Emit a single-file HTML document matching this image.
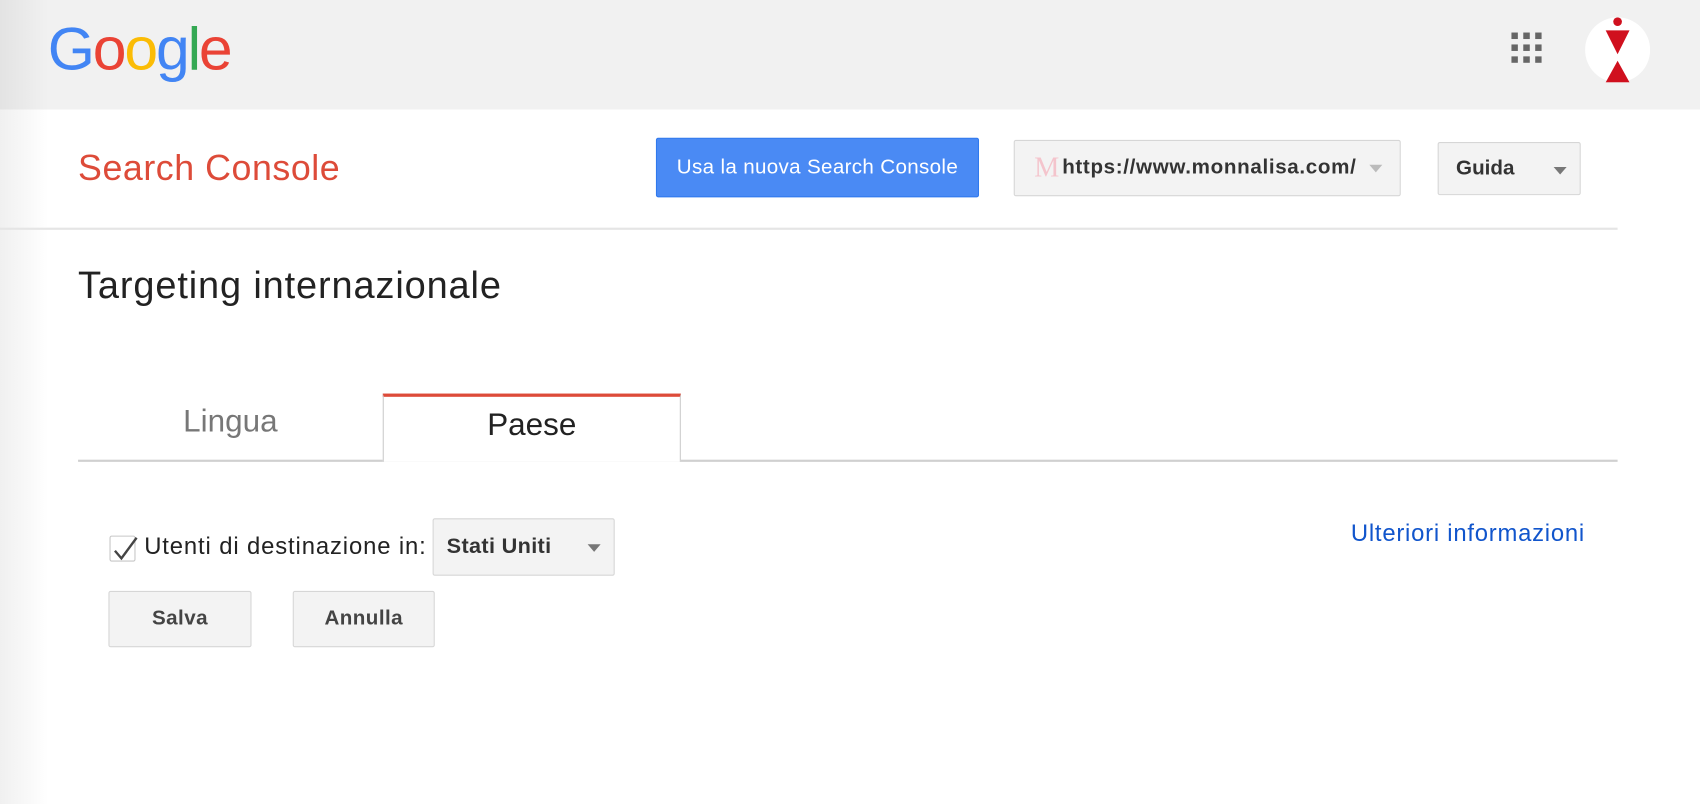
<!DOCTYPE html>
<html><head><meta charset="utf-8"><style>
html,body{margin:0;padding:0;width:1700px;height:804px;overflow:hidden;background:#fff;font-family:"Liberation Sans",Arial,sans-serif}
#w{position:absolute;left:0;top:0;width:1568px;height:742px;transform:scale(1.08418);transform-origin:0 0;background:#fff}
.a{position:absolute;white-space:nowrap}
.btn{position:absolute;box-sizing:border-box;background:#f3f3f3;border:1px solid #d6d6d6;border-radius:2px;font-weight:bold;color:#444;display:flex;align-items:center;white-space:nowrap}
.tri{position:absolute;width:0;height:0;border-left:6px solid transparent;border-right:6px solid transparent;border-top:7px solid #777}
</style></head><body><div id="w">
<div class="a" style="left:0;top:0;width:1568px;height:101px;background:#f1f1f1"></div>
<div class="a" style="left:0;top:0;width:45px;height:742px;background:linear-gradient(to right,rgba(0,0,0,0.06),rgba(0,0,0,0))"></div>
<div class="a" style="left:44px;top:12px;font-size:56px;letter-spacing:-2px;line-height:66px"><span style="color:#4285f4">G</span><span style="color:#ea4335">o</span><span style="color:#fbbc05">o</span><span style="color:#4285f4">g</span><span style="color:#34a853">l</span><span style="color:#ea4335">e</span></div>
<svg class="a" style="left:1394px;top:30px" width="28" height="28" fill="#666">
<rect x="0" y="0" width="6" height="6"/><rect x="11" y="0" width="6" height="6"/><rect x="22" y="0" width="6" height="6"/>
<rect x="0" y="11" width="6" height="6"/><rect x="11" y="11" width="6" height="6"/><rect x="22" y="11" width="6" height="6"/>
<rect x="0" y="22" width="6" height="6"/><rect x="11" y="22" width="6" height="6"/><rect x="22" y="22" width="6" height="6"/></svg>
<svg class="a" style="left:1462px;top:16px" width="60" height="60"><circle cx="30" cy="30" r="30" fill="#fff"/><circle cx="30" cy="4" r="4" fill="#d0101e"/><path d="M19 12H41L30 34Z M30 40L41 60H19Z" fill="#d0101e"/></svg>
<div class="a" style="left:72px;top:136px;font-size:33px;letter-spacing:0.5px;color:#dd4b39">Search Console</div>
<div class="btn" style="left:605px;top:127px;width:298px;height:55px;background:#4a8af4;border-color:#3079ed;color:#fff;font-weight:normal;font-size:19px;letter-spacing:0.3px;justify-content:center">Usa la nuova Search Console</div>
<div class="btn" style="left:935px;top:129px;width:357px;height:52px;font-size:19px;letter-spacing:0.6px;color:#333"><span style="color:#f4c4cc;font-family:'Liberation Serif',serif;font-size:26px;margin-left:18px;font-weight:normal">M</span><span style="margin-left:2px">https://www.monnalisa.com/</span><div class="tri" style="left:327px;top:22px;border-top-color:#bbb;border-width:7px 6px 0"></div></div>
<div class="btn" style="left:1326px;top:131px;width:132px;height:49px;font-size:19px;color:#333"><span style="margin-left:16px">Guida</span><div class="tri" style="left:106px;top:22px"></div></div>
<div class="a" style="left:0;top:210px;width:1492px;height:2px;background:#e5e5e5"></div>
<div class="a" style="left:72px;top:244px;font-size:35px;letter-spacing:0.8px;color:#222">Targeting internazionale</div>
<div class="a" style="left:72px;top:424px;width:1420px;height:2px;background:#d0d0d0"></div>
<div class="a" style="left:72px;top:373px;width:281px;text-align:center;font-size:29px;color:#777">Lingua</div>
<div class="a" style="left:353px;top:363px;width:275px;height:63px;border-top:3px solid #dd4b39;border-left:1px solid #ccc;border-right:1px solid #ccc;background:#fff;box-sizing:border-box;text-align:center;font-size:29px;color:#222;padding-top:10px">Paese</div>
<div class="a" style="left:101px;top:494px;width:24px;height:24px;border:1px solid #c6c6c6;border-radius:2px;box-sizing:border-box;background:#fff"></div>
<svg class="a" style="left:100px;top:490px" width="30" height="30"><path d="M6 18L12 25L26 6" stroke="#444" stroke-width="2.2" fill="none"/></svg>
<div class="a" style="left:133px;top:491px;font-size:22px;letter-spacing:0.8px;color:#222">Utenti di destinazione in:</div>
<div class="btn" style="left:399px;top:478px;width:168px;height:53px;font-size:20px;letter-spacing:0.3px;color:#333"><span style="margin-left:12px">Stati Uniti</span><div class="tri" style="left:142px;top:23px"></div></div>
<div class="a" style="left:1246px;top:479px;font-size:22px;letter-spacing:0.7px;color:#1155cc">Ulteriori informazioni</div>
<div class="btn" style="left:100px;top:545px;width:132px;height:52px;font-size:19px;letter-spacing:0.4px;justify-content:center">Salva</div>
<div class="btn" style="left:270px;top:545px;width:131px;height:52px;font-size:19px;letter-spacing:0.4px;justify-content:center">Annulla</div>
</div></body></html>
